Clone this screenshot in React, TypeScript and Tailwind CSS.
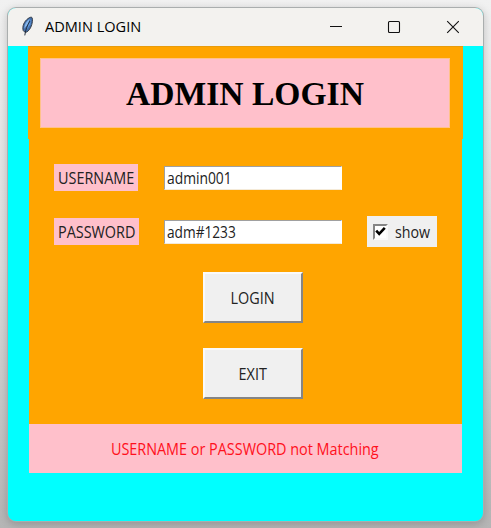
const ui = "inline-block whitespace-nowrap font-['Open_Sans','Noto_Sans',sans-serif]";

function Feather() {
  return (
    <svg width="14" height="22" viewBox="0 0 14 22" className="shrink-0">
      <path d="M2.2 14.5C1 10.5 3 5.5 7 2.6 8.5 1.4 10.3.7 11 1.6c.9 1.5.5 6-1.2 9.6-1.4 3-3.6 5-5.6 5.3z" fill="#4470ac" stroke="#353d48" strokeWidth="1" />
      <path d="M8.8 2.8C5.4 5.3 3.4 8.5 3.2 12.8L6.7 8.5z" fill="#86b7ec" />
      <path d="M10 3.4 9.4 8.2 6 13.6 7.2 7.6z" fill="#5f98dc" />
      <path d="M9 5C6.5 9 4.6 13 3.8 19.4" fill="none" stroke="#25303f" strokeWidth="1" />
    </svg>
  );
}

function Entry({ value, scale }: { value: string; scale: string }) {
  return (
    <div className="flex h-6 w-[178px] items-center border border-t-[#a0a0a0] border-l-[#a0a0a0] border-r-white border-b-[#f4ead8] bg-white pl-[2px]">
      <span className={`${ui} ${scale} origin-left text-[16px] leading-5 text-[#222]`}>{value}</span>
    </div>
  );
}

function PushButton({ label }: { label: string }) {
  return (
    <button className="flex h-[51px] w-[100px] items-center justify-center border-2 border-t-[#fafafa] border-l-[#fafafa] border-r-[#858585] border-b-[#858585] bg-[#f0f0f0] pr-px">
      <span className={`${ui} scale-x-[0.9] text-[16px] leading-5 text-[#222]`}>{label}</span>
    </button>
  );
}

export default function App() {
  return (
    <div className="h-[528px] w-[491px] overflow-hidden bg-linear-to-b from-[#f1f1f1] via-[#dcdcdc] to-[#b5b5b5] pt-[7px] pl-[7px]">
      <div className="h-[515px] w-[477px] rounded-[9px] bg-[#aaaeae] p-px shadow-[0_2px_8px_rgba(0,0,0,0.2)]">
        <div className="flex h-[513px] w-[475px] flex-col overflow-hidden rounded-[8px] bg-[#00ffff]">
          <header className="flex h-[38px] shrink-0 items-center bg-[#f3f2ef] pb-px pl-[13px]">
            <Feather />
            <span className={`${ui} mb-[2px] ml-[10px] w-[285px] origin-left scale-x-[0.97] text-[15px] leading-5 text-black`}>ADMIN LOGIN</span>
            <svg width="134" height="14" viewBox="0 0 134 14" className="shrink-0" fill="none" stroke="#111" strokeWidth="1.1">
              <path d="M0 6.5H12" />
              <rect x="58.5" y="1.5" width="11" height="11" rx="1" />
              <path d="M117.2 1.2 128.8 12.8M128.8 1.2 117.2 12.8" />
            </svg>
          </header>
          <div className="ml-5 h-[93px] w-[435px] shrink-0 border-t border-[#e89c0c] bg-[#ffa500] pt-[11px] pl-3">
            <h1 className="flex h-[70px] w-[410px] items-center justify-center border border-[#ffc28a] bg-[#ffc0cb] pt-px font-['Liberation_Serif',serif] text-[33.6px] leading-none font-bold text-black">
              <span>ADMIN LOGIN</span>
            </h1>
          </div>
          <main className="ml-[21px] flex h-[285px] w-[433px] shrink-0 flex-col bg-[#ffa500] pt-[25px]">
            <div className="flex h-[27px] items-center pl-[25px]">
              <div className="flex w-[110px]">
                <label className="flex h-[27px] w-[84px] items-center bg-[#ffc0cb] pl-1">
                  <span className={`${ui} origin-left scale-x-[0.9] text-[16px] leading-5 text-[#222]`}>USERNAME</span>
                </label>
              </div>
              <Entry value="admin001" scale="scale-x-[0.865]" />
            </div>
            <div className="mt-[25px] flex h-[31px] items-center pl-[25px]">
              <div className="flex w-[110px]">
                <label className="flex h-[27px] w-[85px] items-center bg-[#ffc0cb] pl-1">
                  <span className={`${ui} origin-left scale-x-[0.9] text-[16px] leading-5 text-[#222]`}>PASSWORD</span>
                </label>
              </div>
              <Entry value="adm#1233" scale="scale-x-[0.855]" />
              <div className="ml-[25px] flex h-[31px] w-[70px] items-center bg-[#f0f0f0] pl-[6px]">
                <div className="flex h-4 w-[15px] items-center justify-center border-2 border-t-[#858585] border-l-[#858585] border-r-[#fafafa] border-b-[#fafafa] bg-white">
                  <svg width="11" height="11" viewBox="0 0 11 11" className="shrink-0">
                    <path d="M1.2 4.6 4.2 7.8 9.8 1.8" fill="none" stroke="#000" strokeWidth="2.6" />
                  </svg>
                </div>
                <span className={`${ui} ml-[7px] origin-left scale-x-[0.89] text-[16px] leading-5 text-[#222]`}>show</span>
              </div>
            </div>
            <div className="mt-[25px] flex flex-col gap-[25px] pl-[174px]">
              <PushButton label="LOGIN" />
              <PushButton label="EXIT" />
            </div>
          </main>
          <div className="ml-[21px] flex h-[49px] w-[433px] shrink-0 items-center justify-center bg-[#ffc0cb] pt-px pr-[2px]">
            <span className={`${ui} scale-x-[0.9] text-[16px] leading-5 text-[#ff101c]`}>USERNAME or PASSWORD not Matching</span>
          </div>
        </div>
      </div>
    </div>
  );
}
